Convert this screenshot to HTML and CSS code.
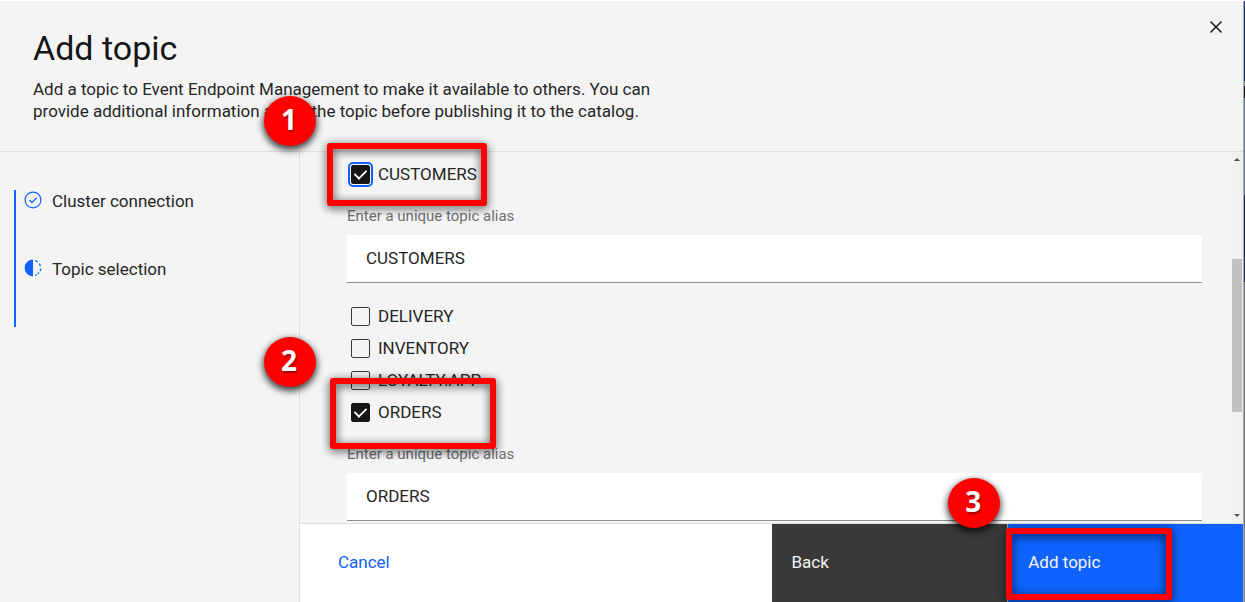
FILE: index.html
```html
<!DOCTYPE html>
<html lang="en">
<head>
<meta charset="utf-8">
<meta name="viewport" content="width=device-width, initial-scale=1">
<title>Add topic</title>
<link rel="stylesheet" href="styles.css">
</head>
<body>
<div class="page">
  <div class="panel">
    <header class="header">
      <div class="heading">
        <h1 class="title">Add topic</h1>
        <p class="intro">Add a topic to Event Endpoint Management to make it available to others. You can<br>provide additional information about the topic before publishing it to the catalog.</p>
      </div>
      <button class="close" type="button" aria-label="Close">
        <svg width="20" height="20" viewBox="0 0 20 20" fill="none" stroke="currentColor" stroke-width="1.5"><path d="M4.5 4.5l11 11M15.5 4.5l-11 11"/></svg>
      </button>
      <span class="badge badge-one">1</span>
    </header>
    <nav class="sidebar" aria-label="Progress">
      <ol class="steps">
        <li class="step">
          <svg class="step-icon" viewBox="0 0 18 18" fill="none" stroke="currentColor"><circle cx="9" cy="9" r="7.9" stroke-width="1.2"/><path d="M5.4 9.2 8 11.6l4.6-4.8" stroke-width="1.3"/></svg>
          <span>Cluster connection</span>
        </li>
        <li class="step">
          <svg class="step-icon" viewBox="0 0 18 18" fill="none" stroke="currentColor"><path d="M9 .6a8.4 8.4 0 0 0 0 16.8z" fill="currentColor" stroke="none"/><path d="M11.2 1.5l2.6 1.3M15.2 4.6l1.3 2.4M16.8 9.6l-.5 2.6M15 13.5l-1.2 1.3M12.8 15.6l-1.8.9" stroke-width="1.3"/></svg>
          <span>Topic selection</span>
        </li>
      </ol>
    </nav>
    <main class="content">
      <form class="topics" id="topics">
        <div class="row">
          <label class="check"><input class="box focused" type="checkbox" checked>CUSTOMERS</label>
          <span class="frame frame-customers"></span>
        </div>
        <div class="alias">
          <label class="alias-label" for="alias-customers">Enter a unique topic alias</label>
          <input class="alias-input" id="alias-customers" type="text" value="CUSTOMERS">
        </div>
        <div class="row"><label class="check"><input class="box" type="checkbox">DELIVERY</label></div>
        <div class="row">
          <label class="check"><input class="box" type="checkbox">INVENTORY</label>
          <span class="badge badge-two">2</span>
        </div>
        <div class="row"><label class="check"><input class="box" type="checkbox">LOYALTY.APP</label></div>
        <div class="row">
          <label class="check"><input class="box" type="checkbox" checked>ORDERS</label>
          <span class="frame frame-orders"></span>
        </div>
        <div class="alias">
          <label class="alias-label" for="alias-orders">Enter a unique topic alias</label>
          <input class="alias-input" id="alias-orders" type="text" value="ORDERS">
        </div>
      </form>
      <div class="scrollbar" aria-hidden="true">
        <svg class="arrow" viewBox="0 0 6 3"><path d="M0 3 3 0l3 3z" fill="#505050"/></svg>
        <div class="track"><div class="thumb"></div></div>
        <svg class="arrow" viewBox="0 0 6 3"><path d="M0 0h6L3 3z" fill="#505050"/></svg>
      </div>
    </main>
    <footer class="footer">
      <button class="action cancel" type="button">Cancel</button>
      <button class="action back" type="button">Back</button>
      <div class="submit">
        <button class="action add" type="submit" form="topics">Add topic</button>
        <span class="frame frame-add"></span>
        <span class="badge badge-three">3</span>
      </div>
    </footer>
  </div>
  <div class="backdrop"></div>
</div>
</body>
</html>
```
FILE: styles.css
```css
* { box-sizing: border-box; }

body {
  margin: 0;
  color: #262626;
  background: #f4f4f4;
  font: 17px/22px Roboto, "Liberation Sans", sans-serif;
}

button, input { font: inherit; color: inherit; }

.page { display: flex; min-height: 100vh; overflow: hidden; border-top: 1px solid #fff; }

.panel {
  flex: 1;
  display: grid;
  grid-template: auto 1fr auto / 300px 1fr;
}

.backdrop {
  width: 2px;
  border-left: 1px solid #a8adb5;
  background: linear-gradient(#1c3568 80px, #8d8d8d 80px 85px, #161616 85px 97px, #6f7d96 97px 194px, #13294b 194px 281px, #777 281px);
}

.header {
  position: relative;
  grid-column: 1 / -1;
  display: flex;
  justify-content: space-between;
  align-items: flex-start;
  padding: 16px 17px 29px 33px;
  border-bottom: 1px solid #e0e0e0;
}

.title { margin: 11px 0 10px; font-size: 34px; line-height: 40px; font-weight: 400; color: #161616; }
.intro { margin: 0; }

.close { display: flex; padding: 0; border: 0; background: none; color: #161616; }

.sidebar { grid-row: 2 / 4; padding: 38px 14px; border-right: 1px solid #e0e0e0; }
.steps {
  display: grid;
  gap: 46px;
  margin: 0;
  padding: 0 0 47px 8px;
  border-left: 2px solid #0f62fe;
  list-style: none;
}
.step { display: flex; gap: 10px; }
.step-icon { width: 18px; height: 18px; margin-top: 1px; color: #0f62fe; }

.content { display: flex; }
.topics { flex: 1; padding: 6px 29px 2px 47px; }

.row { position: relative; display: flex; height: 32px; padding-left: 4px; }
.check { display: flex; align-items: center; gap: 8px; }

.box {
  appearance: none;
  display: grid;
  place-items: center;
  width: 19px;
  height: 19px;
  margin: 0;
  border: 1px solid #393939;
  border-radius: 2px;
}
.box:checked { background: #161616; border-color: #161616; }
.box:checked::after {
  content: "";
  width: 11px;
  height: 6px;
  margin-bottom: 3px;
  border: solid #fff;
  border-width: 0 0 2px 2px;
  transform: rotate(-45deg) scale(.9);
}
.focused { outline: 2px solid #0f62fe; outline-offset: 1px; }

.alias { display: grid; gap: 9px; padding-top: 16px; }
.alias + .row { margin-top: 17px; }
.alias-label { font-size: 15px; line-height: 20px; color: #6f6f6f; }
.alias-input {
  width: 100%;
  height: 48px;
  padding: 0 19px 2px;
  border: 0;
  border-bottom: 1px solid #8d8d8d;
  background: #fff;
  outline: 0;
}

.scrollbar {
  display: flex;
  flex-direction: column;
  align-items: center;
  width: 12px;
  padding: 6px 0;
  background: #f1f1f1;
}
.arrow { width: 6px; height: 3px; }
.track { flex: 1; align-self: stretch; padding: 98px 1px 0; }
.thumb { height: 153px; background: #c1c1c1; }

.footer {
  display: grid;
  grid-template-columns: 2fr 1fr 1fr;
  height: 79px;
  background: #fff;
  border-top: 1px solid #e0e0e0;
}
.action {
  padding: 0 20px 3px;
  border: 0;
  background: none;
  color: #f4f4f4;
  text-align: left;
}
.cancel { padding-left: 38px; color: #0f62fe; }
.back { background: #393939; }
.submit { position: relative; display: grid; border-left: 1px solid #a8a8a8; }
.add { background: #0f62fe; }

.frame {
  position: absolute;
  z-index: 1;
  border: 6px solid #f00;
  border-radius: 3px;
  filter: drop-shadow(0 2px 5px rgba(0, 0, 0, .75));
  pointer-events: none;
}
.frame-customers { top: -15px; left: -20px; width: 160px; height: 63px; }
.frame-orders { top: -18px; left: -17px; width: 166px; height: 71px; }
.frame-add { top: 4px; left: -2px; width: 166px; height: 72px; }

.badge {
  position: absolute;
  z-index: 2;
  width: 52px;
  height: 50px;
  padding-right: 2px;
  border-radius: 50%;
  background: #f00;
  box-shadow: 0 3px 7px 1px rgba(0, 0, 0, .75);
  color: #fff;
  font: 700 28px/47px "Open Sans", "Noto Sans", sans-serif;
  text-align: center;
  text-shadow: 1px 2px 2px rgba(0, 0, 0, .4);
}
.badge-one { top: 95px; left: 264px; }
.badge-two { top: 5px; left: -83px; }
.badge-three { top: -46px; left: -60px; }
```
